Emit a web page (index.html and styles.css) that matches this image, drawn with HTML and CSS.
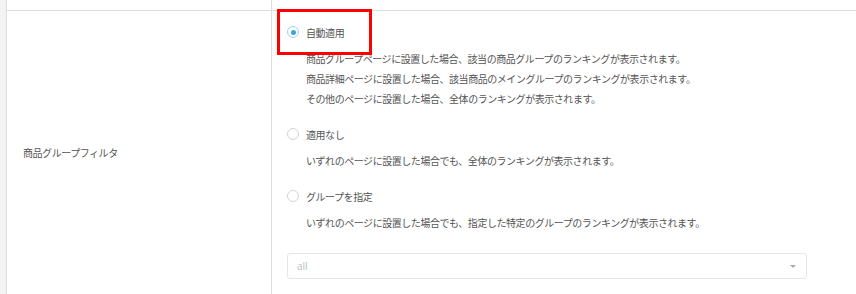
FILE: index.html
```html
<!DOCTYPE html>
<html lang="ja">
<head>
<meta charset="utf-8">
<link rel="stylesheet" href="styles.css">
</head>
<body>
<div class="page">
  <div class="strip"></div>
  <div class="table">
    <div class="row-prev">
      <div class="cell-label"></div>
      <div class="cell-value"></div>
    </div>
    <div class="row">
      <div class="label">商品グループフィルタ</div>
      <div class="value">
        <div class="highlight"></div>
        <div class="option first">
          <div class="head"><span class="radio checked"></span><span>自動適用</span></div>
          <div class="desc">
            <p>商品グループページに設置した場合、該当の商品グループのランキングが表示されます。</p>
            <p>商品詳細ページに設置した場合、該当商品のメイングループのランキングが表示されます。</p>
            <p>その他のページに設置した場合、全体のランキングが表示されます。</p>
          </div>
        </div>
        <div class="option">
          <div class="head"><span class="radio"></span><span>適用なし</span></div>
          <div class="desc">
            <p>いずれのページに設置した場合でも、全体のランキングが表示されます。</p>
          </div>
        </div>
        <div class="option">
          <div class="head"><span class="radio"></span><span>グループを指定</span></div>
          <div class="desc">
            <p>いずれのページに設置した場合でも、指定した特定のグループのランキングが表示されます。</p>
          </div>
        </div>
        <div class="select">
          <span class="placeholder">all</span>
          <span class="caret"></span>
        </div>
      </div>
    </div>
  </div>
</div>
</body>
</html>
```

FILE: styles.css
```css
* { box-sizing: border-box; }
html, body { margin: 0; padding: 0; background: #fff; }
body {
  font-family: "Noto Sans CJK JP", "Noto Sans", sans-serif;
  font-size: 10px;
  color: #555;
  letter-spacing: -0.45px;
}
p { margin: 0; }
.page { display: flex; width: 856px; height: 294px; overflow: hidden; }
.strip { width: 7px; background: #f3f3f3; border-right: 1px solid #ddd; }
.table { flex: 1; display: flex; flex-direction: column; }
.row-prev { display: flex; height: 11px; border-bottom: 1px solid #ddd; }
.cell-label { width: 265px; border-right: 1px solid #ddd; }
.cell-value { flex: 1; }
.row { display: flex; flex: 1; }
.label {
  width: 265px;
  border-right: 1px solid #ddd;
  padding-left: 16px;
  display: flex;
  align-items: center;
}
.value {
  flex: 1;
  position: relative;
  padding: 11px 0 14px 15px;
}
.highlight {
  position: absolute;
  left: 5px;
  top: -2px;
  width: 95px;
  height: 46px;
  border: 3px solid #f00;
}
.option { margin-top: 15px; }
.option.first { margin-top: 0; }
.head { height: 20px; display: flex; align-items: center; gap: 7px; }
.radio {
  width: 12px; height: 12px;
  border-radius: 50%;
  border: 1px solid #d4d4d4;
  background: #fff;
  position: relative;
  flex: none;
}
.radio.checked { border-color: #9fd0ea; }
.radio.checked::after {
  content: "";
  position: absolute;
  left: 2.5px; top: 2.5px;
  width: 5px; height: 5px;
  border-radius: 50%;
  background: #3aa4dc;
}
.desc { margin-top: 7px; padding-left: 19px; line-height: 20px; }
.select {
  margin-top: 20px;
  width: 520px;
  height: 26px;
  border: 1px solid #e6e6e6;
  border-radius: 3px;
  display: flex;
  align-items: center;
  justify-content: space-between;
  padding: 0 10px 0 9px;
}
.placeholder { color: #bbb; font-family: "Open Sans", "Noto Sans", sans-serif; font-size: 10px; letter-spacing: 0; }
.caret {
  width: 0; height: 0;
  border-left: 3px solid transparent;
  border-right: 3px solid transparent;
  border-top: 3px solid #aaa;
}
```
